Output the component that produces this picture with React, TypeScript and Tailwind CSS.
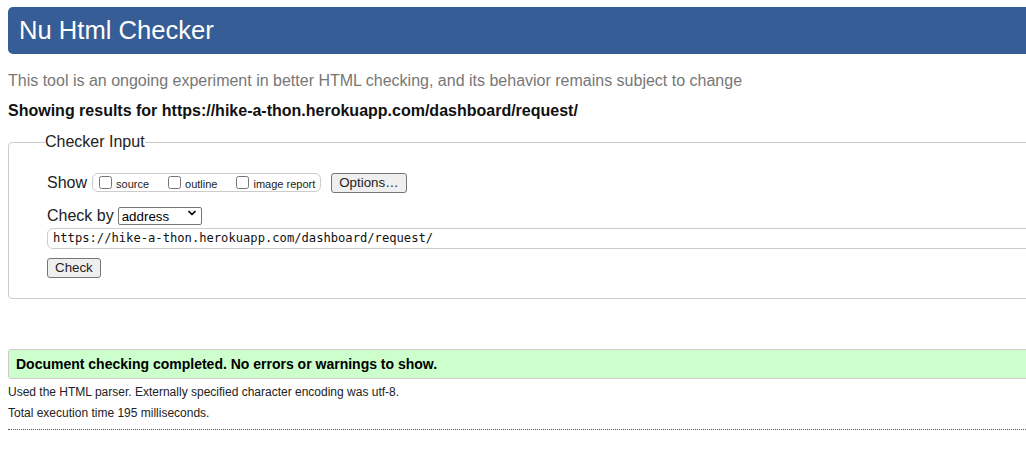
import { ChevronDown } from 'lucide-react';

const url = 'https://hike-a-thon.herokuapp.com/dashboard/request/';

function CheckOption({ label }: { label: string }) {
  return (
    <label className="flex items-center">
      <input type="checkbox" className="m-0 h-[13px] w-[13px]" />
      <span className="ml-[4px] mt-[3px] text-[11px] leading-[13px]">{label}</span>
    </label>
  );
}

function App() {
  return (
    <div className="h-[452px] w-[1026px] overflow-hidden bg-white font-['Liberation_Sans',Arial,sans-serif] text-[#222]">
      <div className="ml-2 w-[1080px] pt-[7px]">
        <h1 className="flex h-[47px] items-center rounded-[5px] bg-[#365d95] pl-[11px] text-[25.6px] font-normal text-white">
          Nu Html Checker
        </h1>
        <p className="mt-[18px] text-[16px] leading-[18px] text-[#777]">
          This tool is an ongoing experiment in better HTML checking, and its behavior remains subject to change
        </p>
        <p className="mt-[12px] text-[16px] font-bold leading-[18px] text-[#111]">
          Showing results for {url}
        </p>

        <fieldset className="mt-[13px] rounded-[4px] border border-[#ccc] pb-[20px] pl-[38px]">
          <legend className="-ml-[2px] px-[0px] text-[16px] leading-[18px]">Checker Input</legend>

          <div className="mt-[21px] flex h-[21px] items-center">
            <span className="mr-[5px] text-[16px]">Show</span>
            <div className="flex h-[19px] items-center gap-[19px] rounded-[6px] border border-[#ccc] pl-[6px] pr-[5px]">
              <CheckOption label="source" />
              <CheckOption label="outline" />
              <CheckOption label="image report" />
            </div>
            <button
              type="button"
              className="ml-[10px] h-[20px] rounded-[3px] border border-[#767676] bg-[#efefef] px-[7px] text-[13.33px] leading-[16px]"
            >
              Options…
            </button>
          </div>

          <div className="mt-[13px] flex h-[19px] items-center">
            <span className="mr-[4px] text-[16px]">Check by</span>
            <div className="relative">
              <select className="h-[18px] w-[84px] appearance-none rounded-[2px] border border-[#767676] bg-white pl-[3px] text-[13.33px] leading-[15px] text-black">
                <option>address</option>
              </select>
              <ChevronDown
                className="pointer-events-none absolute right-[4px] top-[3px] h-[12px] w-[12px] text-black"
                strokeWidth={3.5}
              />
            </div>
          </div>

          <div className="mt-[3px] flex h-[21px] items-center rounded-[6px] border border-[#ccc] pl-[5px] font-['DejaVu_Sans_Mono',monospace] text-[12.15px] text-[#111]">
            {url}
          </div>

          <button
            type="button"
            className="mt-[9px] block h-[20px] rounded-[3px] border border-[#767676] bg-[#efefef] px-[7px] text-[13.33px] leading-[16px]"
          >
            Check
          </button>
        </fieldset>

        <div className="mt-[50px] flex h-[30px] items-center rounded-l-[3px] border border-[#ccc] bg-[#ccffcc] pl-[7px] text-[14px] font-bold text-black">
          Document checking completed. No errors or warnings to show.
        </div>
        <p className="mt-[6px] text-[12px] leading-[14px]">
          Used the HTML parser. Externally specified character encoding was utf-8.
        </p>
        <p className="mt-[7px] text-[12px] leading-[14px]">Total execution time 195 milliseconds.</p>
        <hr className="mt-[9px] border-t border-dotted border-[#555]" />
      </div>
    </div>
  );
}

export default App;
